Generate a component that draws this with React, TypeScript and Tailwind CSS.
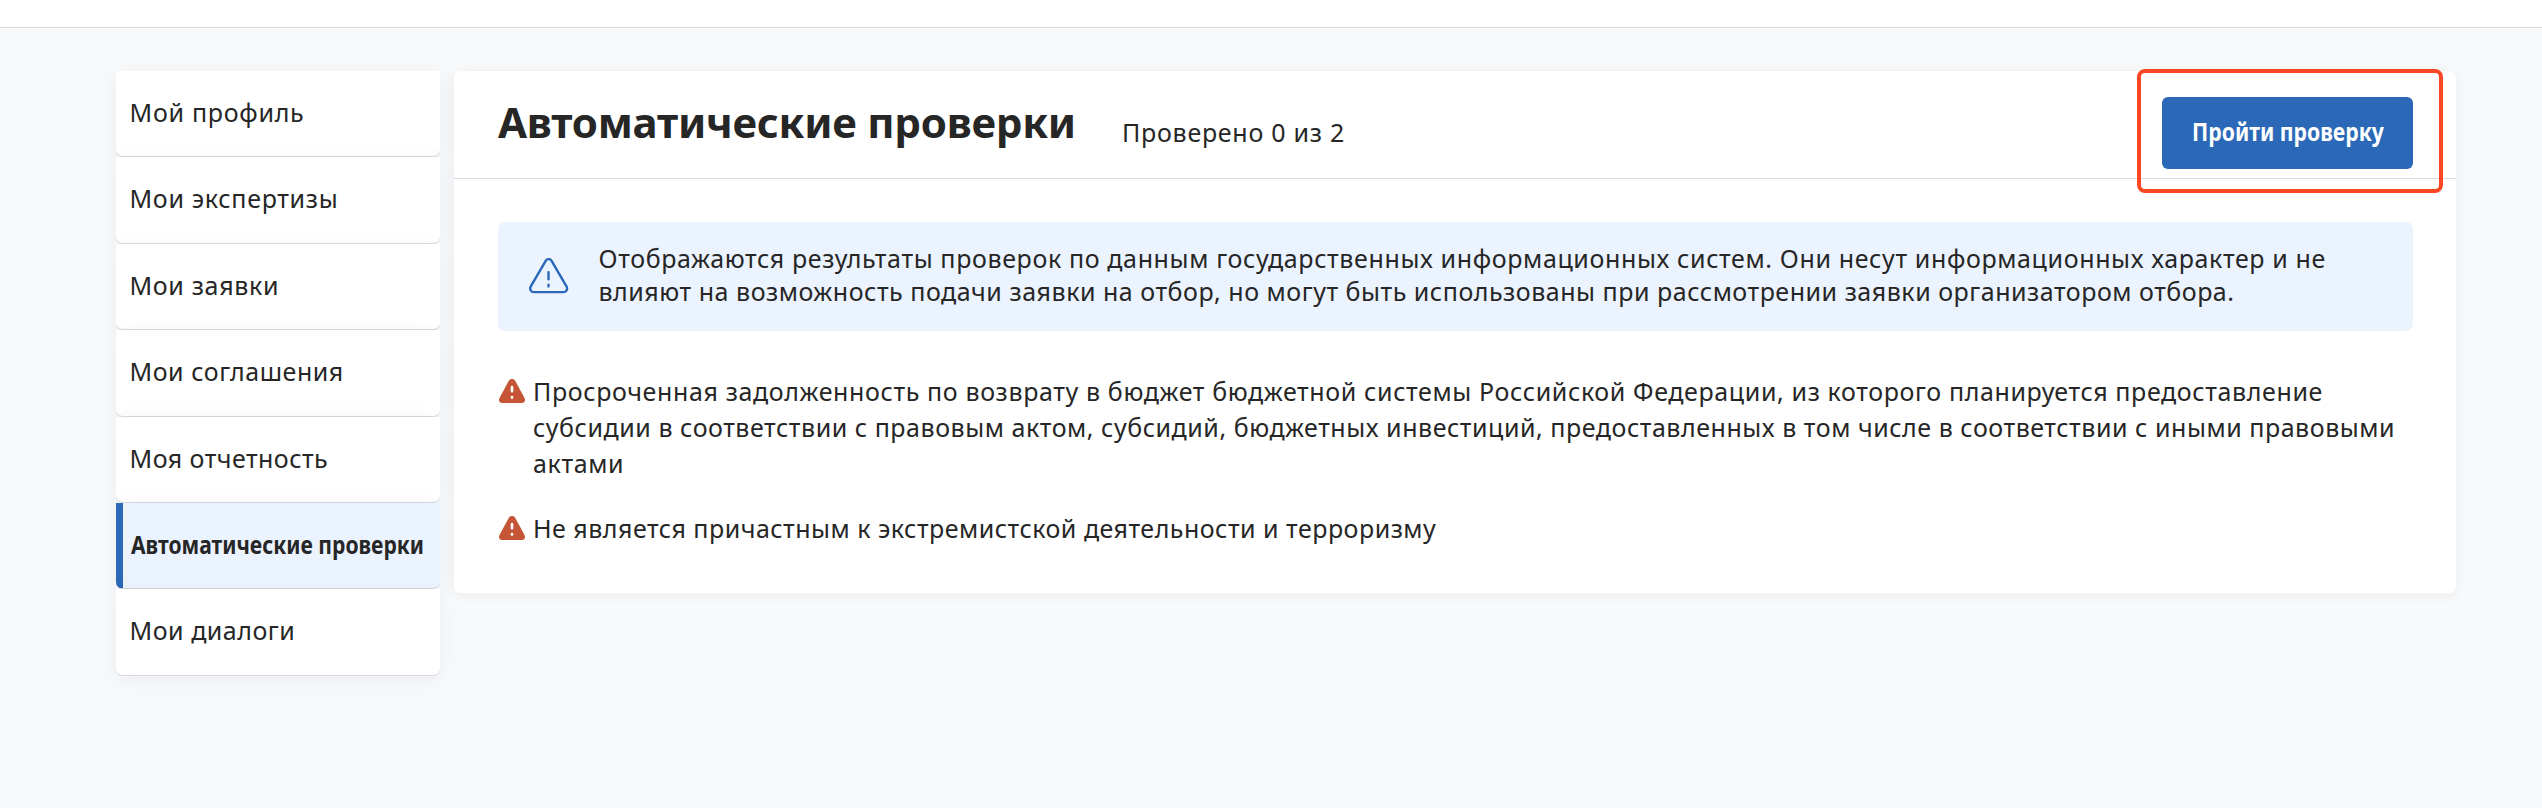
type NavItem = { label: string; height: string; tracking: string; active?: boolean };

const navItems: NavItem[] = [
  { label: "Мой профиль", height: "h-[86px]", tracking: "tracking-[0.72px]" },
  { label: "Мои экспертизы", height: "h-[87px]", tracking: "tracking-[0.69px]" },
  { label: "Мои заявки", height: "h-[86px]", tracking: "tracking-[0.67px]" },
  { label: "Мои соглашения", height: "h-[87px]", tracking: "tracking-[0.546px]" },
  { label: "Моя отчетность", height: "h-[86px]", tracking: "tracking-[0.47px]" },
  { label: "Автоматические проверки", height: "h-[86px]", tracking: "tracking-normal", active: true },
  { label: "Мои диалоги", height: "h-[87px]", tracking: "tracking-[0.52px]" },
];

type Line = { text: string; tracking: string };

const noticeLines: Line[] = [
  {
    text: "Отображаются результаты проверок по данным государственных информационных систем. Они несут информационных характер и не",
    tracking: "tracking-[0.627px]",
  },
  {
    text: "влияют на возможность подачи заявки на отбор, но могут быть использованы при рассмотрении заявки организатором отбора.",
    tracking: "tracking-[0.52px]",
  },
];

const checks: Line[][] = [
  [
    {
      text: "Просроченная задолженность по возврату в бюджет бюджетной системы Российской Федерации, из которого планируется предоставление",
      tracking: "tracking-[0.624px]",
    },
    {
      text: "субсидии в соответствии с правовым актом, субсидий, бюджетных инвестиций, предоставленных в том числе в соответствии с иными правовыми",
      tracking: "tracking-[0.537px]",
    },
    { text: "актами", tracking: "tracking-[0.62px]" },
  ],
  [
    {
      text: "Не является причастным к экстремистской деятельности и терроризму",
      tracking: "tracking-[0.495px]",
    },
  ],
];

function Lines({ lines }: { lines: Line[] }) {
  return (
    <>
      {lines.map((l) => (
        <span key={l.text} className={`block whitespace-nowrap ${l.tracking}`}>
          {l.text}{" "}
        </span>
      ))}
    </>
  );
}

function NoticeIcon() {
  return (
    <svg width="40" height="36" viewBox="0 0 40 36" fill="none" stroke="#2b69b8" strokeWidth="2.4" strokeLinecap="round" strokeLinejoin="round">
      <path d="M16.7 2.9 1.8 28.3C0.3 31 1.8 34.1 4.9 34.1H34.4C37.5 34.1 39 31 37.5 28.3L22.6 2.9C21.1 0.5 18.2 0.5 16.7 2.9Z" />
      <path d="M19.5 14.1V21.3M19.5 26.7V28.4" />
    </svg>
  );
}

function WarningIcon() {
  return (
    <svg width="26" height="24" viewBox="0 0 26 24">
      <path fill="#c65537" d="M9.8 1.8C11.2-.6 14.8-.6 16.2 1.8L25.5 19C26.8 21.5 25.4 24 22.7 24H3.3C.6 24-.8 21.5.5 19Z" />
      <path stroke="#fff" strokeWidth="2.6" strokeLinecap="round" d="M13 8.1V12.3M13 18V18.6" />
    </svg>
  );
}

export default function App() {
  return (
    <div className="h-[808px] w-[2542px] overflow-hidden bg-[#f8f9fb] font-['Noto_Sans',sans-serif] text-[25px] text-[#262626]">
      <header className="h-7 border-b border-[#d9dce1] bg-white" />
      <div className="flex items-start gap-3.5 pt-[43px] pl-[116px]">
        <nav className="w-[324px] shrink-0">
          {navItems.map((item) => (
            <a
              key={item.label}
              className={`flex items-center rounded-b-[7px] border-b border-b-[#d5d8df] pb-1 whitespace-nowrap shadow-[0_4px_22px_rgba(30,35,25,0.055)] ${item.height} ${
                item.active ? "border-l-[7px] border-l-[#2b69b8] bg-[#ebf3ff] pl-[7.5px] font-bold" : "bg-white pl-[13.5px]"
              }`}
            >
              <span className={`leading-8 ${item.tracking} ${item.active ? "origin-left scale-x-[0.844]" : ""}`}>{item.label}</span>
            </a>
          ))}
        </nav>

        <main className="h-[522px] w-[2002px] shrink-0 rounded-[6px] bg-white shadow-[0_2px_14px_rgba(30,35,40,0.06)]">
          <div className="flex h-[108px] items-start border-b border-[#d9dce8] pr-[43px] pl-11">
            <h1 className="mt-[29px] w-[624px] text-[42px] leading-[44px] font-bold tracking-[-0.23px] whitespace-nowrap">
              Автоматические проверки
            </h1>
            <span className="mt-[45px] leading-8 tracking-[0.73px] whitespace-nowrap">Проверено 0 из 2</span>
            <div className="relative mt-[26px] ml-auto">
              <button className="flex h-[72px] w-[251px] items-center justify-center rounded-[6px] bg-[#2b69b8] pb-1 font-bold whitespace-nowrap text-white">
                <span className="scale-x-[0.849] leading-8">Пройти проверку</span>
              </button>
              <div className="pointer-events-none absolute -top-7 -left-[25px] h-[124px] w-[306px] rounded-[8px] border-4 border-[#fb4724]" />
            </div>
          </div>

          <div className="pt-[43px] pr-[43px] pl-11">
            <section className="flex h-[109px] rounded-[7px] bg-[#ebf3ff] pt-[19.5px] pl-[31px]">
              <div className="mt-[16.5px] w-[69.5px] shrink-0">
                <NoticeIcon />
              </div>
              <p className="leading-[33px]">
                <Lines lines={noticeLines} />
              </p>
            </section>

            <ul className="mt-[41.5px] flex flex-col gap-[29px]">
              {checks.map((lines) => (
                <li key={lines[0].text} className="flex pl-px">
                  <div className="mt-1.5 w-[34px] shrink-0">
                    <WarningIcon />
                  </div>
                  <p className="leading-9">
                    <Lines lines={lines} />
                  </p>
                </li>
              ))}
            </ul>
          </div>
        </main>
      </div>
    </div>
  );
}
